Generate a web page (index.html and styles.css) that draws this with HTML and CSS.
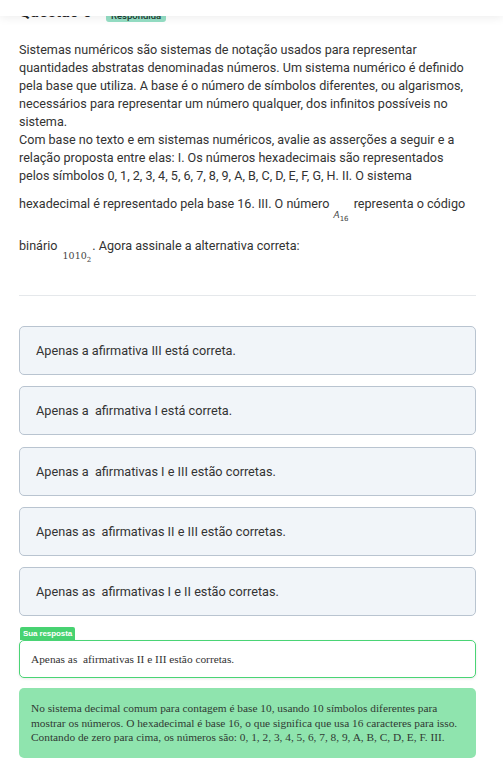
FILE: index.html
```html
<!DOCTYPE html>
<html lang="pt-BR">
<head>
<meta charset="utf-8">
<title>Questão 5</title>
<link rel="stylesheet" href="styles.css">
</head>
<body>
<div class="topbar"></div>
<main class="page">
  <div class="title-row">
    <h2 class="title">Questão 5</h2>
    <span class="badge">Respondida</span>
  </div>
  <div class="statement">
    Sistemas numéricos são sistemas de notação usados para representar quantidades abstratas denominadas números. Um sistema numérico é definido pela base que utiliza. A base é o número de símbolos diferentes, ou algarismos, necessários para representar um número qualquer, dos infinitos possíveis no sistema.<br>
    Com base no texto e em sistemas numéricos, avalie as asserções a seguir e a relação proposta entre elas: I. Os números hexadecimais são representados pelos símbolos 0, 1, 2, 3, 4, 5, 6, 7, 8, 9, A, B, C, D, E, F, G, H. II. O sistema hexadecimal é representado pela base 16. III. O número <span class="math math-a"><i class="mi">A</i><sub class="msub">16</sub></span> representa o código binário <span class="math math-b"><span class="mn">1010</span><sub class="msub">2</sub></span>. Agora assinale a alternativa correta:
  </div>
  <hr class="divider">
  <ul class="options">
    <li class="option">Apenas a afirmativa III está correta.</li>
    <li class="option">Apenas a&nbsp; afirmativa I está correta.</li>
    <li class="option">Apenas a&nbsp; afirmativas I e III estão corretas.</li>
    <li class="option">Apenas as&nbsp; afirmativas II e III estão corretas.</li>
    <li class="option">Apenas as&nbsp; afirmativas I e II estão corretas.</li>
  </ul>
  <div class="answer">
    <span class="answer-tab">Sua resposta</span>
    <div class="answer-box">Apenas as&nbsp; afirmativas II e III estão corretas.</div>
  </div>
  <div class="feedback">No sistema decimal comum para contagem é base 10, usando 10 símbolos diferentes para mostrar os números. O hexadecimal é base 16, o que significa que usa 16 caracteres para isso. Contando de zero para cima, os números são: 0, 1, 2, 3, 4, 5, 6, 7, 8, 9, A, B, C, D, E, F. III.</div>
</main>
</body>
</html>
```

FILE: styles.css
```css
* { box-sizing: border-box; }
html, body { margin: 0; padding: 0; background: #ffffff; }
body {
  font-family: Roboto, "Liberation Sans", Arial, sans-serif;
  color: #333333;
}
.topbar {
  position: fixed;
  top: 0; left: 0; right: 0;
  height: 16px;
  background: #ffffff;
  box-shadow: 0 2px 10px rgba(0, 0, 0, 0.07);
  z-index: 10;
}
.page {
  padding: 0 27px 0 19px;
}
.title-row {
  display: flex;
  align-items: flex-end;
  gap: 14px;
  height: 22px;
}
.title {
  margin: 0;
  font-size: 16px;
  font-weight: 700;
  line-height: 20px;
  color: #222222;
}
.badge {
  font-size: 9.5px;
  line-height: 12px;
  padding: 0 5px;
  background: #95dfc5;
  border-radius: 3px;
  color: #1f3b30;
  font-weight: 500;
}
.statement {
  margin-top: 19px;
  font-size: 12.6px;
  line-height: 18px;
  color: #333333;
}
.math {
  display: inline-block;
  font-size: 10px;
  line-height: 12px;
  color: #444444;
}
.math-a {
  padding-top: 24px;
  vertical-align: -10px;
  font-family: "DejaVu Sans", sans-serif;
  font-size: 9px;
  margin: 0 2px 0 1px;
}
.math-b {
  padding-top: 27px;
  vertical-align: -9px;
  font-family: "DejaVu Serif", "Liberation Serif", serif;
  font-size: 9.5px;
  margin: 0 1px 0 2px;
}
.mi { font-style: italic; }
.msub {
  font-size: 7px;
  vertical-align: -3px;
  line-height: 1;
}
.divider {
  border: 0;
  border-top: 1px solid #e5e8eb;
  margin: 31px 0 0 0;
}
.options {
  list-style: none;
  margin: 30px 0 0 0;
  padding: 0;
  display: flex;
  flex-direction: column;
  gap: 11.25px;
}
.option {
  height: 49px;
  display: flex;
  align-items: center;
  padding: 0 16px;
  background: #f1f5f9;
  border: 1px solid #b9c4d0;
  border-radius: 5px;
  font-size: 12.7px;
  color: #333333;
}
.answer {
  margin-top: 11px;
  display: flex;
  flex-direction: column;
  align-items: flex-start;
}
.answer-tab {
  margin-left: 1px;
  background: #47d271;
  color: #ffffff;
  font-family: "Liberation Sans", Arial, sans-serif;
  font-weight: 700;
  font-size: 8px;
  line-height: 13px;
  height: 13px;
  padding: 0 3px;
  border-radius: 2px 2px 0 0;
  letter-spacing: -0.1px;
}
.answer-box {
  align-self: stretch;
  height: 38px;
  display: flex;
  align-items: center;
  padding: 0 11px;
  background: #ffffff;
  border: 1.5px solid #4ad475;
  border-radius: 5px;
  box-shadow: 0 1px 3px rgba(0, 0, 0, 0.08);
  font-family: "Liberation Serif", "Times New Roman", serif;
  font-size: 11.35px;
  color: #333333;
}
.feedback {
  margin-top: 10px;
  padding: 13px 11px 13px 12px;
  background: #8fe4ae;
  border-radius: 5px;
  font-family: "Liberation Serif", "Times New Roman", serif;
  font-size: 11.35px;
  line-height: 14.5px;
  color: #2f3a33;
}
```
